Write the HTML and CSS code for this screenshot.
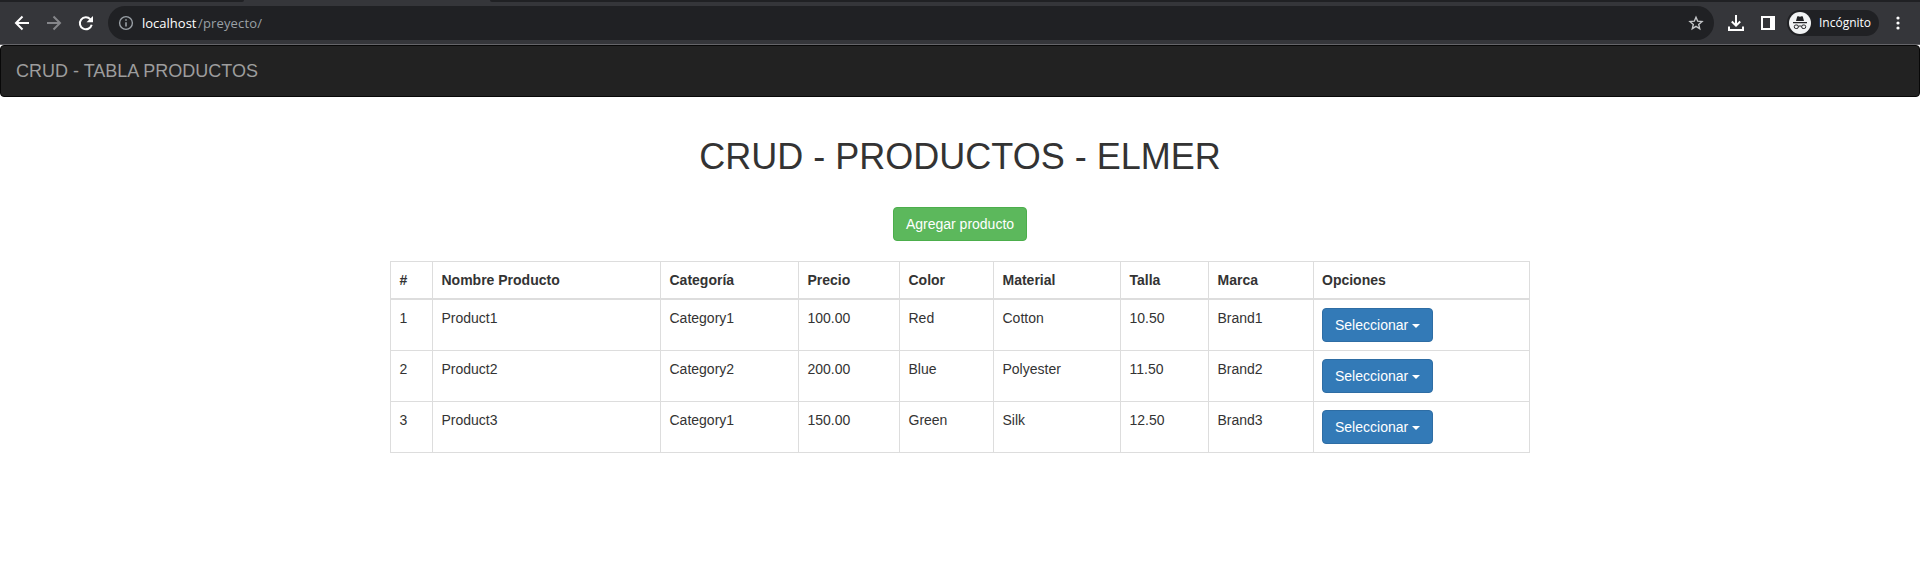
FILE: index.html
```html
<!DOCTYPE html>
<html lang="es">
<head>
<meta charset="utf-8">
<title>CRUD - Productos</title>
<link rel="stylesheet" href="styles.css">
</head>
<body>
<header class="browser">
  <div class="tabs"><span class="tab-left"></span><span class="tab-right"></span></div>
  <div class="toolbar">
    <svg class="nav-icons" width="108" height="42" viewBox="0 0 108 42" fill="none" stroke-width="2">
      <path d="M29 21H16.5M22.5 14.5L16 21l6.500 6.500" stroke="#fff"/>
      <path d="M47 21h12.500M53.500 14.500L60 21l-6.500 6.500" stroke="#85868a"/>
      <path d="M90.400 17.300A6 6 0 1 0 91.700 22.800" stroke="#fff"/>
      <path d="M93 14v6.300h-6.500z" fill="#fff"/>
    </svg>
    <div class="omnibox">
      <svg width="16" height="16" viewBox="0 0 16 16" fill="none" stroke="#9aa0a6" stroke-width="1.400">
        <circle cx="8" cy="8" r="6.400"/><path d="M8 7.200V11.500M8 4.300V5.800" stroke-width="1.600"/>
      </svg>
      <div class="url"><span class="host">localhost</span><span class="path">/preyecto/</span></div>
      <svg class="star" width="16" height="16" viewBox="0 0 16 16" fill="none" stroke="#c5c7c9" stroke-width="1.400">
        <path d="M8 2.200L9.700 6.200 14 6.600 10.700 9.400 11.700 13.700 8 11.400 4.300 13.700 5.300 9.400 2 6.600 6.300 6.200Z"/>
      </svg>
    </div>
    <svg class="download" width="16" height="16" viewBox="0 0 16 16" fill="none" stroke="#fff" stroke-width="2">
      <path d="M8 0V10.500M3.800 6.500L8 10.700l4.200-4.200M1 11.500V15H15V11.500"/>
    </svg>
    <svg class="panel" width="14" height="14" viewBox="0 0 14 14"><path fill="#fff" fill-rule="evenodd" d="M0 0H14V14H0ZM2 2V12H9V2Z"/></svg>
    <div class="incognito">
      <svg width="22" height="22" viewBox="0 0 22 22">
        <circle cx="11" cy="11" r="11" fill="#f1f3f4"/>
        <path fill="#202124" d="M7 9L8.200 4.600Q8.500 4 9.300 4.300L11 4.800 12.700 4.300Q13.500 4 13.800 4.600L15 9ZM4 10H18V11.200H4Z"/>
        <g fill="none" stroke="#202124"><rect x="5.300" y="13" width="4" height="3.500" rx="1.500"/><rect x="12.700" y="13" width="4" height="3.500" rx="1.500"/><path d="M9.300 14.300Q11 13.500 12.700 14.300"/></g>
      </svg>
      <span>Incógnito</span>
    </div>
    <svg class="menu" width="4" height="14" viewBox="0 0 4 14" fill="#fff"><circle cx="2" cy="2" r="1.600"/><circle cx="2" cy="7" r="1.600"/><circle cx="2" cy="12" r="1.600"/></svg>
  </div>
</header>
<nav class="navbar"><span class="brand">CRUD - TABLA PRODUCTOS</span></nav>
<main class="container">
  <h1>CRUD - PRODUCTOS - ELMER</h1>
  <button class="btn btn-success">Agregar producto</button>
  <table class="table">
    <colgroup><col class="c-id"><col class="c-name"><col class="c-cat"><col class="c-price"><col class="c-color"><col class="c-mat"><col class="c-size"><col class="c-brand"><col class="c-opt"></colgroup>
    <thead><tr><th>#</th><th>Nombre Producto</th><th>Categoría</th><th>Precio</th><th>Color</th><th>Material</th><th>Talla</th><th>Marca</th><th>Opciones</th></tr></thead>
    <tbody>
      <tr><td>1</td><td>Product1</td><td>Category1</td><td>100.00</td><td>Red</td><td>Cotton</td><td>10.50</td><td>Brand1</td><td><button class="btn btn-primary">Seleccionar <span class="caret"></span></button></td></tr>
      <tr><td>2</td><td>Product2</td><td>Category2</td><td>200.00</td><td>Blue</td><td>Polyester</td><td>11.50</td><td>Brand2</td><td><button class="btn btn-primary">Seleccionar <span class="caret"></span></button></td></tr>
      <tr><td>3</td><td>Product3</td><td>Category1</td><td>150.00</td><td>Green</td><td>Silk</td><td>12.50</td><td>Brand3</td><td><button class="btn btn-primary">Seleccionar <span class="caret"></span></button></td></tr>
    </tbody>
  </table>
</main>
</body>
</html>
```
FILE: styles.css
```css
* { box-sizing: border-box; }
body {
  margin: 0;
  background: #fff;
  color: #333;
  font: 14px/20px "Liberation Sans", Arial, sans-serif;
  overflow: hidden;
}
svg { display: block; flex: none; }

.browser { height: 45px; background: #35363a; border-bottom: 1px solid #656569; }
.tabs { display: flex; justify-content: space-between; height: 2px; }
.tab-left { width: 244px; background: #202124; border-bottom-right-radius: 3px; }
.tab-right { width: 1430px; background: #202124; border-bottom-left-radius: 3px; }
.toolbar { display: flex; align-items: center; height: 42px; }
.omnibox {
  display: flex;
  align-items: center;
  width: 1606px;
  height: 34px;
  padding: 0 10px;
  border-radius: 17px;
  background: #202124;
}
.url { margin-left: 8px; font: 13px/20px "Open Sans", sans-serif; white-space: nowrap; }
.host { display: inline-block; width: 56px; color: #fff; }
.path { color: #9aa0a6; letter-spacing: 0.15px; }
.star { margin-left: auto; }
.download { margin-left: 14px; }
.panel { margin-left: 17px; }
.incognito {
  display: flex;
  align-items: center;
  gap: 8px;
  width: 92px;
  height: 26px;
  margin-left: 12px;
  padding-left: 2px;
  border-radius: 13px;
  background: #202124;
  color: #fff;
  font: 12px/20px "Open Sans", sans-serif;
}
.menu { margin-left: 17px; }

.navbar {
  height: 52px;
  padding: 15px 15px;
  border: 1px solid #080808;
  border-radius: 4px;
  background: #222;
}
.brand { display: block; color: #9d9d9d; font-size: 18px; line-height: 20px; }

.container {
  display: flex;
  flex-direction: column;
  align-items: center;
  width: 1140px;
  margin: 0 auto;
  padding-top: 40px;
}
h1 { margin: 0 0 30px; font-size: 36px; font-weight: 500; line-height: 40px; }
.btn {
  height: 34px;
  padding: 6px 12px;
  border: 1px solid;
  border-radius: 4px;
  color: #fff;
  font: 14px/20px "Liberation Sans", Arial, sans-serif;
  white-space: nowrap;
}
.btn-success { background: #5cb85c; border-color: #4cae4c; }
.btn-primary { display: block; background: #337ab7; border-color: #2e6da4; }
.caret {
  display: inline-block;
  vertical-align: middle;
  border-top: 4px solid;
  border-right: 4px solid transparent;
  border-left: 4px solid transparent;
}
.table {
  align-self: flex-start;
  width: 1139px;
  margin-top: 20px;
  border-collapse: collapse;
  table-layout: fixed;
}
th, td { padding: 8px 8px 8px 8.5px; border: 1px solid #ddd; text-align: left; vertical-align: top; }
th:last-child, td:last-child { padding-left: 8px; }
th { border-bottom-width: 2px; }
.c-id { width: 42px; }
.c-name { width: 228px; }
.c-cat { width: 138px; }
.c-price { width: 101px; }
.c-color { width: 94px; }
.c-mat { width: 127px; }
.c-size { width: 88px; }
.c-brand { width: 105px; }
.c-opt { width: 216px; }
```
